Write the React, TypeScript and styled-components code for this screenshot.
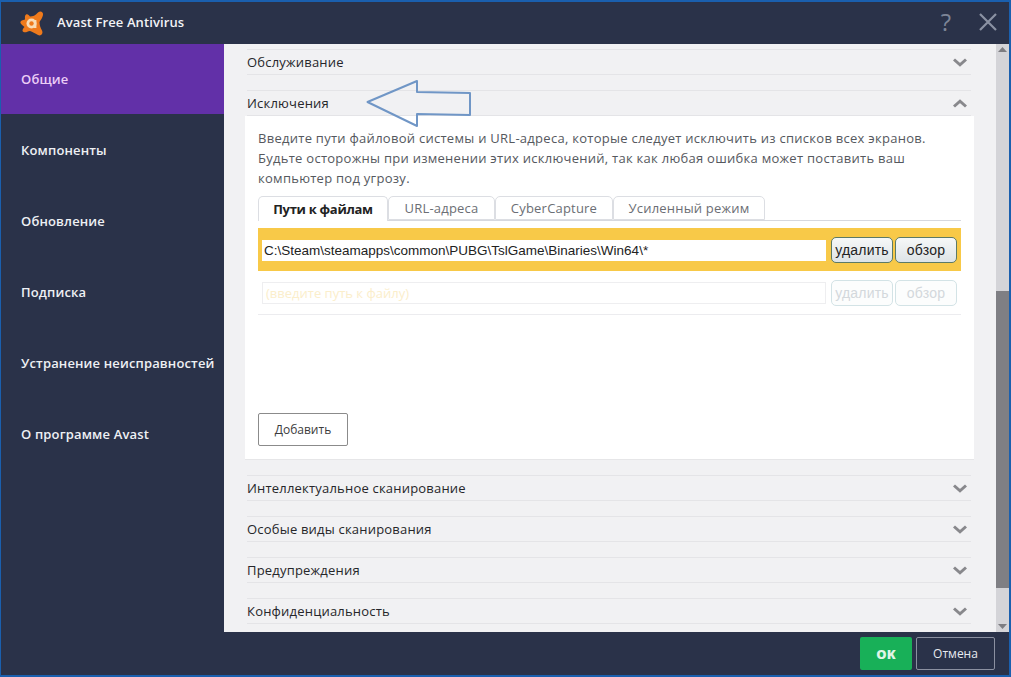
import styled, { createGlobalStyle } from "styled-components";

const GlobalStyle = createGlobalStyle`
  html, body {
    margin: 0;
    padding: 0;
    background: #1a5fae;
  }
  * { box-sizing: border-box; }
`;

const menuItems = [
  "Общие",
  "Компоненты",
  "Обновление",
  "Подписка",
  "Устранение неисправностей",
  "О программе Avast",
];

const Chevron = ({ up }: { up?: boolean }) => (
  <ChevronIcon width="14" height="9" viewBox="0 0 14 9">
    <path
      d={up ? "M1 7.5 L7 2.2 L13 7.5" : "M1 1.5 L7 6.8 L13 1.5"}
      fill="none"
      stroke="#88888c"
      strokeWidth="3"
    />
  </ChevronIcon>
);

const SectionRow = ({ title, up }: { title: string; up?: boolean }) => (
  <Row>
    <span>{title}</span>
    <Chevron up={up} />
  </Row>
);

const App = () => {
  return (
    <Win>
      <GlobalStyle />
      <TitleBar>
        <Logo width="28" height="28" viewBox="0 0 28 28">
          <path
            d="M8 4.5 C9.5 3.5 11 5 12 6.5 C15 6.5 17 5.5 20 2.5 C22.5 0.5 25.5 2 25 5 C24.5 8 22.5 10 21.5 12 C21.5 15 22.5 18 24 20.5 C25.5 23.5 23 26.5 20 25 C17 23.5 14.5 21.5 12 21 C9.5 21.5 7.5 23 5.5 22 C3.5 21 5 18.5 6.5 17 C5 15.5 3 14.5 2.5 13 C2 10.5 5 10 7 9.5 C7 8 6.5 5.5 8 4.5 Z"
            fill="#ef7a1c"
          />
          <circle cx="13.5" cy="13.5" r="5" fill="#f8dcb6" />
          <circle cx="13.5" cy="13.5" r="2.2" fill="#ef7a1c" />
          <rect x="16" y="10" width="2.4" height="8" fill="#f8dcb6" />
        </Logo>
        <AppName>Avast Free Antivirus</AppName>
        <Help>?</Help>
        <svg width="18" height="18" viewBox="0 0 18 18">
          <path d="M1 1 L17 17 M17 1 L1 17" stroke="#8b92a3" strokeWidth="2.2" />
        </svg>
      </TitleBar>
      <Body>
        <Sidebar>
          {menuItems.map((item, i) => (
            <MenuItem key={item} $active={i === 0}>
              {item}
            </MenuItem>
          ))}
        </Sidebar>
        <Content>
          <Sections>
            <SectionRow title="Обслуживание" />
            <SectionRow title="Исключения" up />
            <Panel>
              <Description>
                Введите пути файловой системы и URL-адреса, которые следует
                исключить из списков всех экранов.
                <br />
                Будьте осторожны при изменении этих исключений, так как любая
                ошибка может поставить ваш
                <br />
                компьютер под угрозу.
              </Description>
              <Tabs>
                <Tab $active $w={130}>Пути к файлам</Tab>
                <Tab $w={107}>URL-адреса</Tab>
                <Tab $w={118}>CyberCapture</Tab>
                <Tab $w={152}>Усиленный режим</Tab>
              </Tabs>
              <PathRow>
                <PathInput>C:\Steam\steamapps\common\PUBG\TslGame\Binaries\Win64\*</PathInput>
                <SmallButton>удалить</SmallButton>
                <SmallButton>обзор</SmallButton>
              </PathRow>
              <EmptyRow>
                <EmptyInput>(введите путь к файлу)</EmptyInput>
                <SmallButton $disabled>удалить</SmallButton>
                <SmallButton $disabled>обзор</SmallButton>
              </EmptyRow>
              <AddButton>Добавить</AddButton>
            </Panel>
            <SectionRow title="Интеллектуальное сканирование" />
            <SectionRow title="Особые виды сканирования" />
            <SectionRow title="Предупреждения" />
            <SectionRow title="Конфиденциальность" />
          </Sections>
          <Arrow width="108" height="52" viewBox="0 0 108 52">
            <path
              d="M1.5 25 L51 4 L51 15 L104 16 L104 38 L51 37 L51 49 Z"
              fill="none"
              stroke="#7096c6"
              strokeWidth="2"
              strokeLinejoin="round"
            />
          </Arrow>
          <ScrollBar>
            <ScrollArrow viewBox="0 0 13 12">
              <path d="M2 8 L6.5 3 L11 8 Z" fill="#7d7d82" />
            </ScrollArrow>
            <ScrollTrack>
              <ScrollThumb />
            </ScrollTrack>
            <ScrollArrow viewBox="0 0 13 12">
              <path d="M2 4 L6.5 9 L11 4 Z" fill="#7d7d82" />
            </ScrollArrow>
          </ScrollBar>
        </Content>
      </Body>
      <Footer>
        <OkButton>OK</OkButton>
        <CancelButton>Отмена</CancelButton>
      </Footer>
    </Win>
  );
};

export default App;

const Win = styled.div`
  width: 1011px;
  height: 677px;
  display: flex;
  flex-direction: column;
  overflow: hidden;
  background: #2a3249;
  border-style: solid;
  border-color: #1a5fae;
  border-width: 2px 2px 2px 1px;
  font-family: "Open Sans", "Liberation Sans", sans-serif;
`;

const TitleBar = styled.div`
  height: 42px;
  flex: none;
  display: flex;
  align-items: center;
  padding: 0 12px 2px 17px;
  background: #2a3249;
`;

const Logo = styled.svg`
  display: block;
  flex: none;
  margin-top: 3px;
`;

const AppName = styled.div`
  margin-left: 11px;
  flex: 1;
  color: #f2f3f6;
  font-size: 13px;
  font-weight: 600;
  letter-spacing: 0.1px;
`;

const Help = styled.div`
  margin-right: 28px;
  color: #7d8597;
  font-size: 24px;
  line-height: 28px;
`;

const Body = styled.div`
  flex: 1;
  min-height: 0;
  display: flex;
`;

const Sidebar = styled.div`
  width: 223px;
  flex: none;
  background: #2a3249;
`;

const MenuItem = styled.div<{ $active?: boolean }>`
  height: ${(p) => (p.$active ? "70px" : "71px")};
  padding-left: 20px;
  display: flex;
  align-items: center;
  color: ${(p) => (p.$active ? "#eccdf6" : "#eef0f4")};
  background: ${(p) => (p.$active ? "#6230a8" : "transparent")};
  font-size: 13px;
  font-weight: 600;
  letter-spacing: 0.15px;
`;

const Content = styled.div`
  position: relative;
  flex: 1;
  min-width: 0;
  display: flex;
  background: #f1f1f3;
`;

const Sections = styled.div`
  flex: 1;
  min-width: 0;
  padding: 5px 25px 0 23px;
  display: flex;
  flex-direction: column;
  gap: 15px;
`;

const Row = styled.div`
  height: 26px;
  flex: none;
  padding-right: 4px;
  display: flex;
  align-items: center;
  justify-content: space-between;
  border-top: 1px solid #e4e4e7;
  border-bottom: 1px solid #e4e4e7;
  color: #26262a;
  font-size: 13px;
  letter-spacing: 0.2px;
`;

const ChevronIcon = styled.svg`
  display: block;
`;

const Panel = styled.div`
  height: 344px;
  flex: none;
  margin: -15px -3px 0 -2px;
  padding: 12px 13px 0;
  background: #fff;
  border-bottom: 1px solid #e6e6e8;
`;

const Description = styled.div`
  height: 60px;
  color: #55585e;
  font-size: 13px;
  line-height: 20px;
  letter-spacing: 0.27px;
  white-space: nowrap;
`;

const Tabs = styled.div`
  height: 25px;
  margin-top: 8px;
  display: flex;
  border-bottom: 1px solid #d6d8de;
`;

const Tab = styled.div<{ $active?: boolean; $w: number }>`
  width: ${(p) => p.$w}px;
  height: ${(p) => (p.$active ? "25px" : "24px")};
  display: flex;
  align-items: center;
  justify-content: center;
  background: #fff;
  border: 1px solid #dcdee3;
  border-bottom: ${(p) => (p.$active ? "none" : "1px solid #dcdee3")};
  border-radius: 5px 5px 0 0;
  color: ${(p) => (p.$active ? "#222" : "#6b6e74")};
  font-size: 13px;
  font-weight: ${(p) => (p.$active ? 700 : 400)};
  letter-spacing: ${(p) => (p.$active ? "-0.3px" : "0.2px")};
`;

const PathRow = styled.div`
  height: 43px;
  margin-top: 7px;
  padding: 0 3px 0 4px;
  display: flex;
  align-items: center;
  gap: 2px;
  background: #f8c948;
`;

const PathInput = styled.div`
  width: 564px;
  height: 21px;
  margin: 2px 3px 0 0;
  padding-left: 2px;
  display: flex;
  align-items: center;
  background: #fff;
  color: #222;
  font-family: "Liberation Sans", sans-serif;
  font-size: 13.5px;
`;

const EmptyRow = styled.div`
  height: 44px;
  padding: 0 3px 0 4px;
  display: flex;
  align-items: center;
  gap: 2px;
  border-bottom: 1px solid #ececef;
`;

const EmptyInput = styled.div`
  width: 564px;
  height: 22px;
  margin-right: 3px;
  padding-left: 3px;
  display: flex;
  align-items: center;
  border: 1px solid #eeeef0;
  color: #fbeecb;
  font-size: 13px;
`;

const SmallButton = styled.div<{ $disabled?: boolean }>`
  width: 62px;
  height: 26px;
  display: flex;
  align-items: center;
  justify-content: center;
  border: 1px solid ${(p) => (p.$disabled ? "#d3e3e6" : "#5c7a66")};
  border-radius: 5px;
  background: ${(p) =>
    p.$disabled ? "#fcfdfd" : "linear-gradient(#f6f8f8, #dde3e6)"};
  color: ${(p) => (p.$disabled ? "#d3d8dc" : "#222")};
  font-family: "Liberation Sans", sans-serif;
  font-size: 14px;
  letter-spacing: 0.2px;
`;

const AddButton = styled.div`
  width: 90px;
  height: 33px;
  margin-top: 98px;
  display: flex;
  align-items: center;
  justify-content: center;
  border: 1px solid #8b8b8b;
  border-radius: 2px;
  color: #3c3c3c;
  font-size: 12px;
`;

const Arrow = styled.svg`
  position: absolute;
  left: 142px;
  top: 33px;
`;

const ScrollBar = styled.div`
  width: 13px;
  flex: none;
  display: flex;
  flex-direction: column;
  background: #d4d4d8;
`;

const ScrollArrow = styled.svg`
  width: 13px;
  height: 12px;
  flex: none;
  display: block;
`;

const ScrollTrack = styled.div`
  flex: 1;
  padding-top: 235px;
`;

const ScrollThumb = styled.div`
  height: 297px;
  background: #7f7f84;
`;

const Footer = styled.div`
  height: 43px;
  flex: none;
  padding: 5px 14px 0 0;
  display: flex;
  justify-content: flex-end;
  gap: 4px;
  background: #2a3249;
`;

const OkButton = styled.div`
  width: 52px;
  height: 33px;
  display: flex;
  align-items: center;
  justify-content: center;
  border-radius: 2px;
  background: #18b058;
  color: #dff5e6;
  font-size: 13px;
  font-weight: 800;
`;

const CancelButton = styled.div`
  width: 79px;
  height: 33px;
  display: flex;
  align-items: center;
  justify-content: center;
  border: 1px solid #8b90a0;
  border-radius: 2px;
  color: #e8eaf0;
  font-size: 12px;
`;
